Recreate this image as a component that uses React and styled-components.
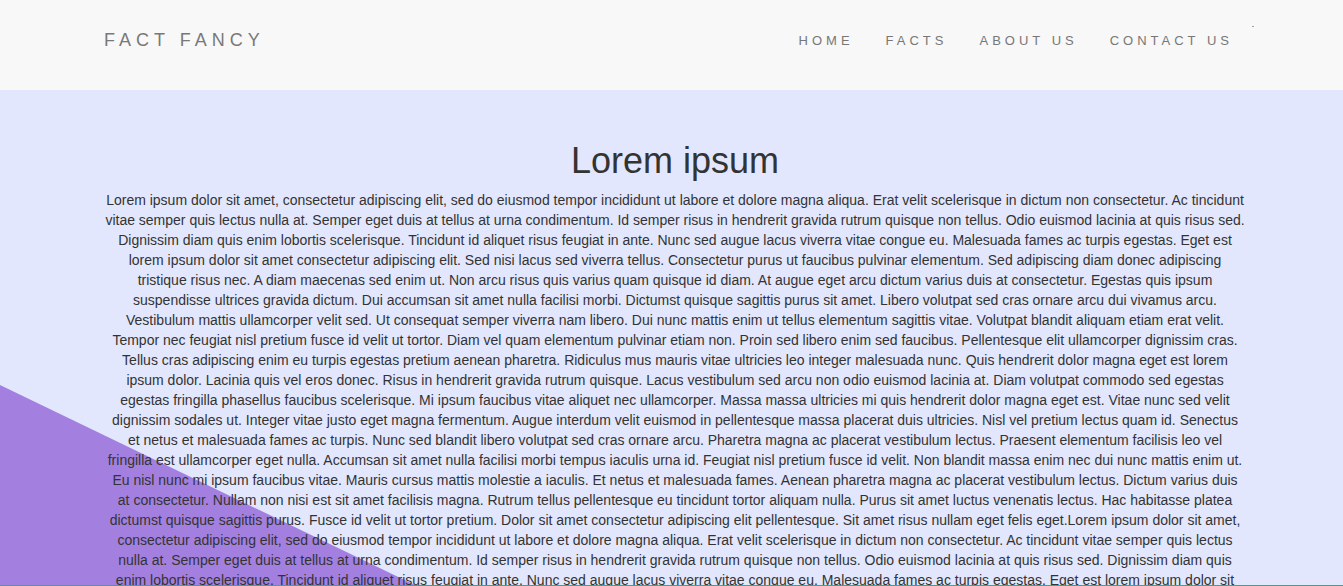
import React from "react";
import styled, { createGlobalStyle } from "styled-components";

const Global = createGlobalStyle`
  html, body { margin: 0; padding: 0; }
  body { font-family: "Liberation Sans", Arial, sans-serif; background: #e2e7fd; }
`;

const Header = styled.header`
  height: 90px;
  box-sizing: border-box;
  background: #f8f8f8;
  display: flex;
  align-items: center;
  justify-content: space-between;
  padding: 0 89px 10px 104px;
`;

const Logo = styled.div`
  font-size: 18px;
  letter-spacing: 5px;
  color: #787878;
  text-transform: uppercase;
`;

const Nav = styled.nav`
  display: flex;
  align-items: center;
  gap: 32px;
`;

const NavLink = styled.a`
  font-size: 13px;
  letter-spacing: 4px;
  color: #777;
  text-decoration: none;
  text-transform: uppercase;
`;

const Dot = styled.span`
  align-self: flex-start;
  margin: -7px 0 0 -13px;
  width: 2px;
  height: 1px;
  background: #9aa0b0;
`;

const Section = styled.section`
  position: relative;
  height: 495px;
  overflow: hidden;
  background: #e2e7fd;
  padding-left: 7px;
  box-sizing: border-box;
`;

const Shape = styled.div`
  position: absolute;
  left: 0;
  top: 295px;
  width: 1000px;
  height: 482px;
  background: #a380e0;
  clip-path: polygon(0 0, 100% 100%, 0 100%);
`;

const Content = styled.div`
  position: relative;
  width: 1140px;
  margin: 0 auto;
  text-align: center;
  color: #333;
  padding-top: 50px;
`;

const Title = styled.h1`
  font-size: 36px;
  font-weight: 400;
  margin: 0 0 8px;
  color: #333;
`;

const Text = styled.p`
  margin: 0;
  font-size: 14px;
  line-height: 20px;
`;

const Bottom = styled.div`
  height: 10px;
  background: #29ad8e;
`;

const BASE =
  "Lorem ipsum dolor sit amet, consectetur adipiscing elit, sed do eiusmod tempor incididunt ut labore et dolore magna aliqua. Erat velit scelerisque in dictum non consectetur. Ac tincidunt vitae semper quis lectus nulla at. Semper eget duis at tellus at urna condimentum. Id semper risus in hendrerit gravida rutrum quisque non tellus. Odio euismod lacinia at quis risus sed. Dignissim diam quis enim lobortis scelerisque. Tincidunt id aliquet risus feugiat in ante. Nunc sed augue lacus viverra vitae congue eu. Malesuada fames ac turpis egestas. Eget est lorem ipsum dolor sit amet consectetur adipiscing elit. Sed nisi lacus sed viverra tellus. Consectetur purus ut faucibus pulvinar elementum. Sed adipiscing diam donec adipiscing tristique risus nec. A diam maecenas sed enim ut. Non arcu risus quis varius quam quisque id diam. At augue eget arcu dictum varius duis at consectetur. Egestas quis ipsum suspendisse ultrices gravida dictum. Dui accumsan sit amet nulla facilisi morbi. Dictumst quisque sagittis purus sit amet. Libero volutpat sed cras ornare arcu dui vivamus arcu. Vestibulum mattis ullamcorper velit sed. Ut consequat semper viverra nam libero. Dui nunc mattis enim ut tellus elementum sagittis vitae. Volutpat blandit aliquam etiam erat velit. Tempor nec feugiat nisl pretium fusce id velit ut tortor. Diam vel quam elementum pulvinar etiam non. Proin sed libero enim sed faucibus. Pellentesque elit ullamcorper dignissim cras. Tellus cras adipiscing enim eu turpis egestas pretium aenean pharetra. Ridiculus mus mauris vitae ultricies leo integer malesuada nunc. Quis hendrerit dolor magna eget est lorem ipsum dolor. Lacinia quis vel eros donec. Risus in hendrerit gravida rutrum quisque. Lacus vestibulum sed arcu non odio euismod lacinia at. Diam volutpat commodo sed egestas egestas fringilla phasellus faucibus scelerisque. Mi ipsum faucibus vitae aliquet nec ullamcorper. Massa massa ultricies mi quis hendrerit dolor magna eget est. Vitae nunc sed velit dignissim sodales ut. Integer vitae justo eget magna fermentum. Augue interdum velit euismod in pellentesque massa placerat duis ultricies. Nisl vel pretium lectus quam id. Senectus et netus et malesuada fames ac turpis. Nunc sed blandit libero volutpat sed cras ornare arcu. Pharetra magna ac placerat vestibulum lectus. Praesent elementum facilisis leo vel fringilla est ullamcorper eget nulla. Accumsan sit amet nulla facilisi morbi tempus iaculis urna id. Feugiat nisl pretium fusce id velit. Non blandit massa enim nec dui nunc mattis enim ut. Eu nisl nunc mi ipsum faucibus vitae. Mauris cursus mattis molestie a iaculis. Et netus et malesuada fames. Aenean pharetra magna ac placerat vestibulum lectus. Dictum varius duis at consectetur. Nullam non nisi est sit amet facilisis magna. Rutrum tellus pellentesque eu tincidunt tortor aliquam nulla. Purus sit amet luctus venenatis lectus. Hac habitasse platea dictumst quisque sagittis purus. Fusce id velit ut tortor pretium. Dolor sit amet consectetur adipiscing elit pellentesque. Sit amet risus nullam eget felis eget.";

const links = ["Home", "Facts", "About us", "Contact us"];

export default function App() {
  return (
    <>
      <Global />
      <Header>
        <Logo>Fact Fancy</Logo>
        <Nav>
          {links.map((l) => (
            <NavLink key={l} href="#">
              {l}
            </NavLink>
          ))}
          <Dot />
        </Nav>
      </Header>
      <Section>
        <Shape />
        <Content>
          <Title>Lorem ipsum</Title>
          <Text>{BASE + BASE + BASE}</Text>
        </Content>
      </Section>
      <Bottom />
    </>
  );
}
